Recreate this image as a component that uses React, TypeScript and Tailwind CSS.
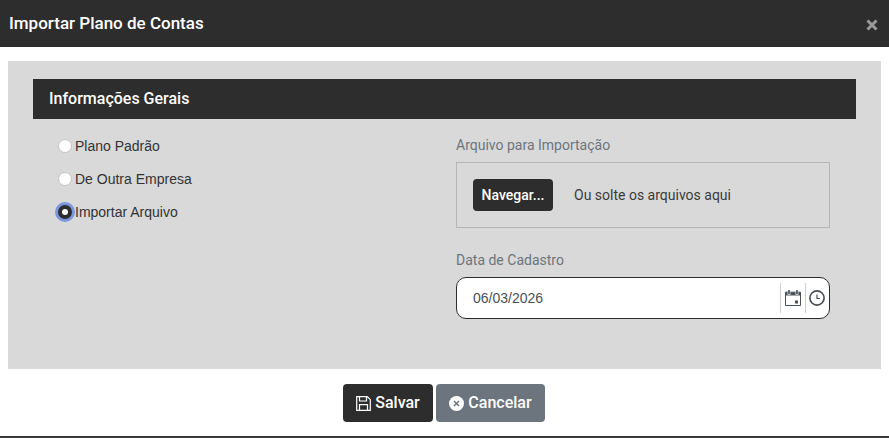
import React from "react";

const roboto = "font-['Roboto',sans-serif]";
const arial = "font-['Liberation_Sans',Arial,sans-serif]";

function Radio({ label, checked }: { label: string; checked?: boolean }) {
  return (
    <div className="flex h-[33px] items-center gap-[3px]">
      {checked ? (
        <span className="flex h-[14px] w-[14px] shrink-0 items-center justify-center rounded-full bg-[#2d2d2d] shadow-[0_0_0_3px_#7a97dc]">
          <span className="h-[6px] w-[6px] rounded-full bg-white" />
        </span>
      ) : (
        <span className="h-[14px] w-[14px] shrink-0 rounded-full border border-[#c4c4c4] bg-white" />
      )}
      <span className={`${arial} text-[14px] leading-none text-[#333333]`}>{label}</span>
    </div>
  );
}

export default function App() {
  return (
    <div className={`${roboto} relative h-[438px] w-[889px] overflow-hidden bg-white`}>
      <header className="flex h-[47px] items-center justify-between bg-[#2d2d2d] pl-[9px] pr-[11px]">
        <h1 className="text-[17px] font-medium text-white">Importar Plano de Contas</h1>
        <svg width="12" height="12" viewBox="0 0 12 12" className="mt-[3px]">
          <path d="M1.5 1.5 10.5 10.5M10.5 1.5 1.5 10.5" stroke="#9a9a9a" strokeWidth="3" />
        </svg>
      </header>

      <main className="mx-[8px] mt-[14px] h-[308px] bg-[#d9d9d9] px-[25px] pt-[18px]">
        <div className="flex h-[40px] items-center bg-[#2d2d2d] pl-[16px] text-[16px] font-medium text-white">
          Informações Gerais
        </div>
        <div className="flex">
          <div className="w-[423px] pl-[25px] pt-[10px]">
            <Radio label="Plano Padrão" />
            <Radio label="De Outra Empresa" />
            <Radio label="Importar Arquivo" checked />
          </div>
          <div className="w-[374px]">
            <div className="mt-[17px] text-[14px] leading-[18px] text-[#6c757d]">Arquivo para Importação</div>
            <div className="mt-[8px] flex h-[66px] items-center border border-[#b5b5b5] pl-[16px]">
              <span className="flex h-[32px] w-[80px] items-center justify-center rounded-[4px] bg-[#2d2d2d] text-[14px] font-medium text-white">
                Navegar...
              </span>
              <span className="ml-[21px] text-[14px] text-[#3b3b3b]">Ou solte os arquivos aqui</span>
            </div>
            <div className="mt-[23px] text-[14px] leading-[18px] text-[#6c757d]">Data de Cadastro</div>
            <div className="mt-[8px] flex h-[42px] items-center rounded-[10px] border border-[#2d2d2d] bg-white pl-[16px]">
              <span className={`${arial} flex-1 text-[14px] text-[#495057]`}>06/03/2026</span>
              <span className="flex h-[30px] w-[25px] items-center justify-center border-l border-[#ccd0d4]">
                <svg width="16" height="16" viewBox="0 0 16 16">
                  <path d="M.5 2.2h15v13.3H.5z" fill="none" stroke="#495057" strokeWidth="1" />
                  <path d="M.5 2.2h15v3.3H.5z" fill="#495057" />
                  <path d="M4 2v3M12 2v3" stroke="#d5d7d9" strokeWidth="3" />
                  <path d="M4 0v4.2M12 0v4.2" stroke="#495057" strokeWidth="1.6" />
                  <rect x="10" y="10.5" width="3" height="3" fill="#495057" />
                </svg>
              </span>
              <span className="flex h-[30px] w-[24px] items-center justify-center border-l border-[#ccd0d4] pr-[1px]">
                <svg width="16" height="16" viewBox="0 0 16 16">
                  <circle cx="8" cy="8" r="7.1" fill="none" stroke="#495057" strokeWidth="1.7" />
                  <path d="M8 4.5V8.5H11" fill="none" stroke="#495057" strokeWidth="1.2" />
                </svg>
              </span>
            </div>
          </div>
        </div>
      </main>

      <footer className="mt-[15px] flex justify-center gap-[3px] pr-[1px]">
        <button className="flex h-[38px] w-[90px] items-center justify-center gap-[4px] rounded-[4px] bg-[#2d2d2d] text-[16px] font-medium text-white">
          <svg width="15" height="15" viewBox="0 0 15 15" className="mt-[1px]">
            <path d="M.7.7h10.6l3 3v10.6H.7z" fill="none" stroke="white" strokeWidth="1.2" />
            <path d="M3.5 1v4h7V1M3.5 14V8.7h8V14" fill="none" stroke="white" strokeWidth="1.2" />
          </svg>
          Salvar
        </button>
        <button className="flex h-[38px] w-[109px] items-center justify-center gap-[4px] rounded-[4px] bg-[#6c757d] text-[16px] font-medium text-white">
          <svg width="15" height="15" viewBox="0 0 15 15" className="mt-[1px]">
            <circle cx="7.5" cy="7.5" r="7.5" fill="white" />
            <path d="M5 5l5 5M10 5l-5 5" stroke="#6c757d" strokeWidth="1.5" />
          </svg>
          Cancelar
        </button>
      </footer>
      <div className="absolute bottom-0 left-0 h-[2px] w-full bg-[#3a3a3a]" />
    </div>
  );
}
